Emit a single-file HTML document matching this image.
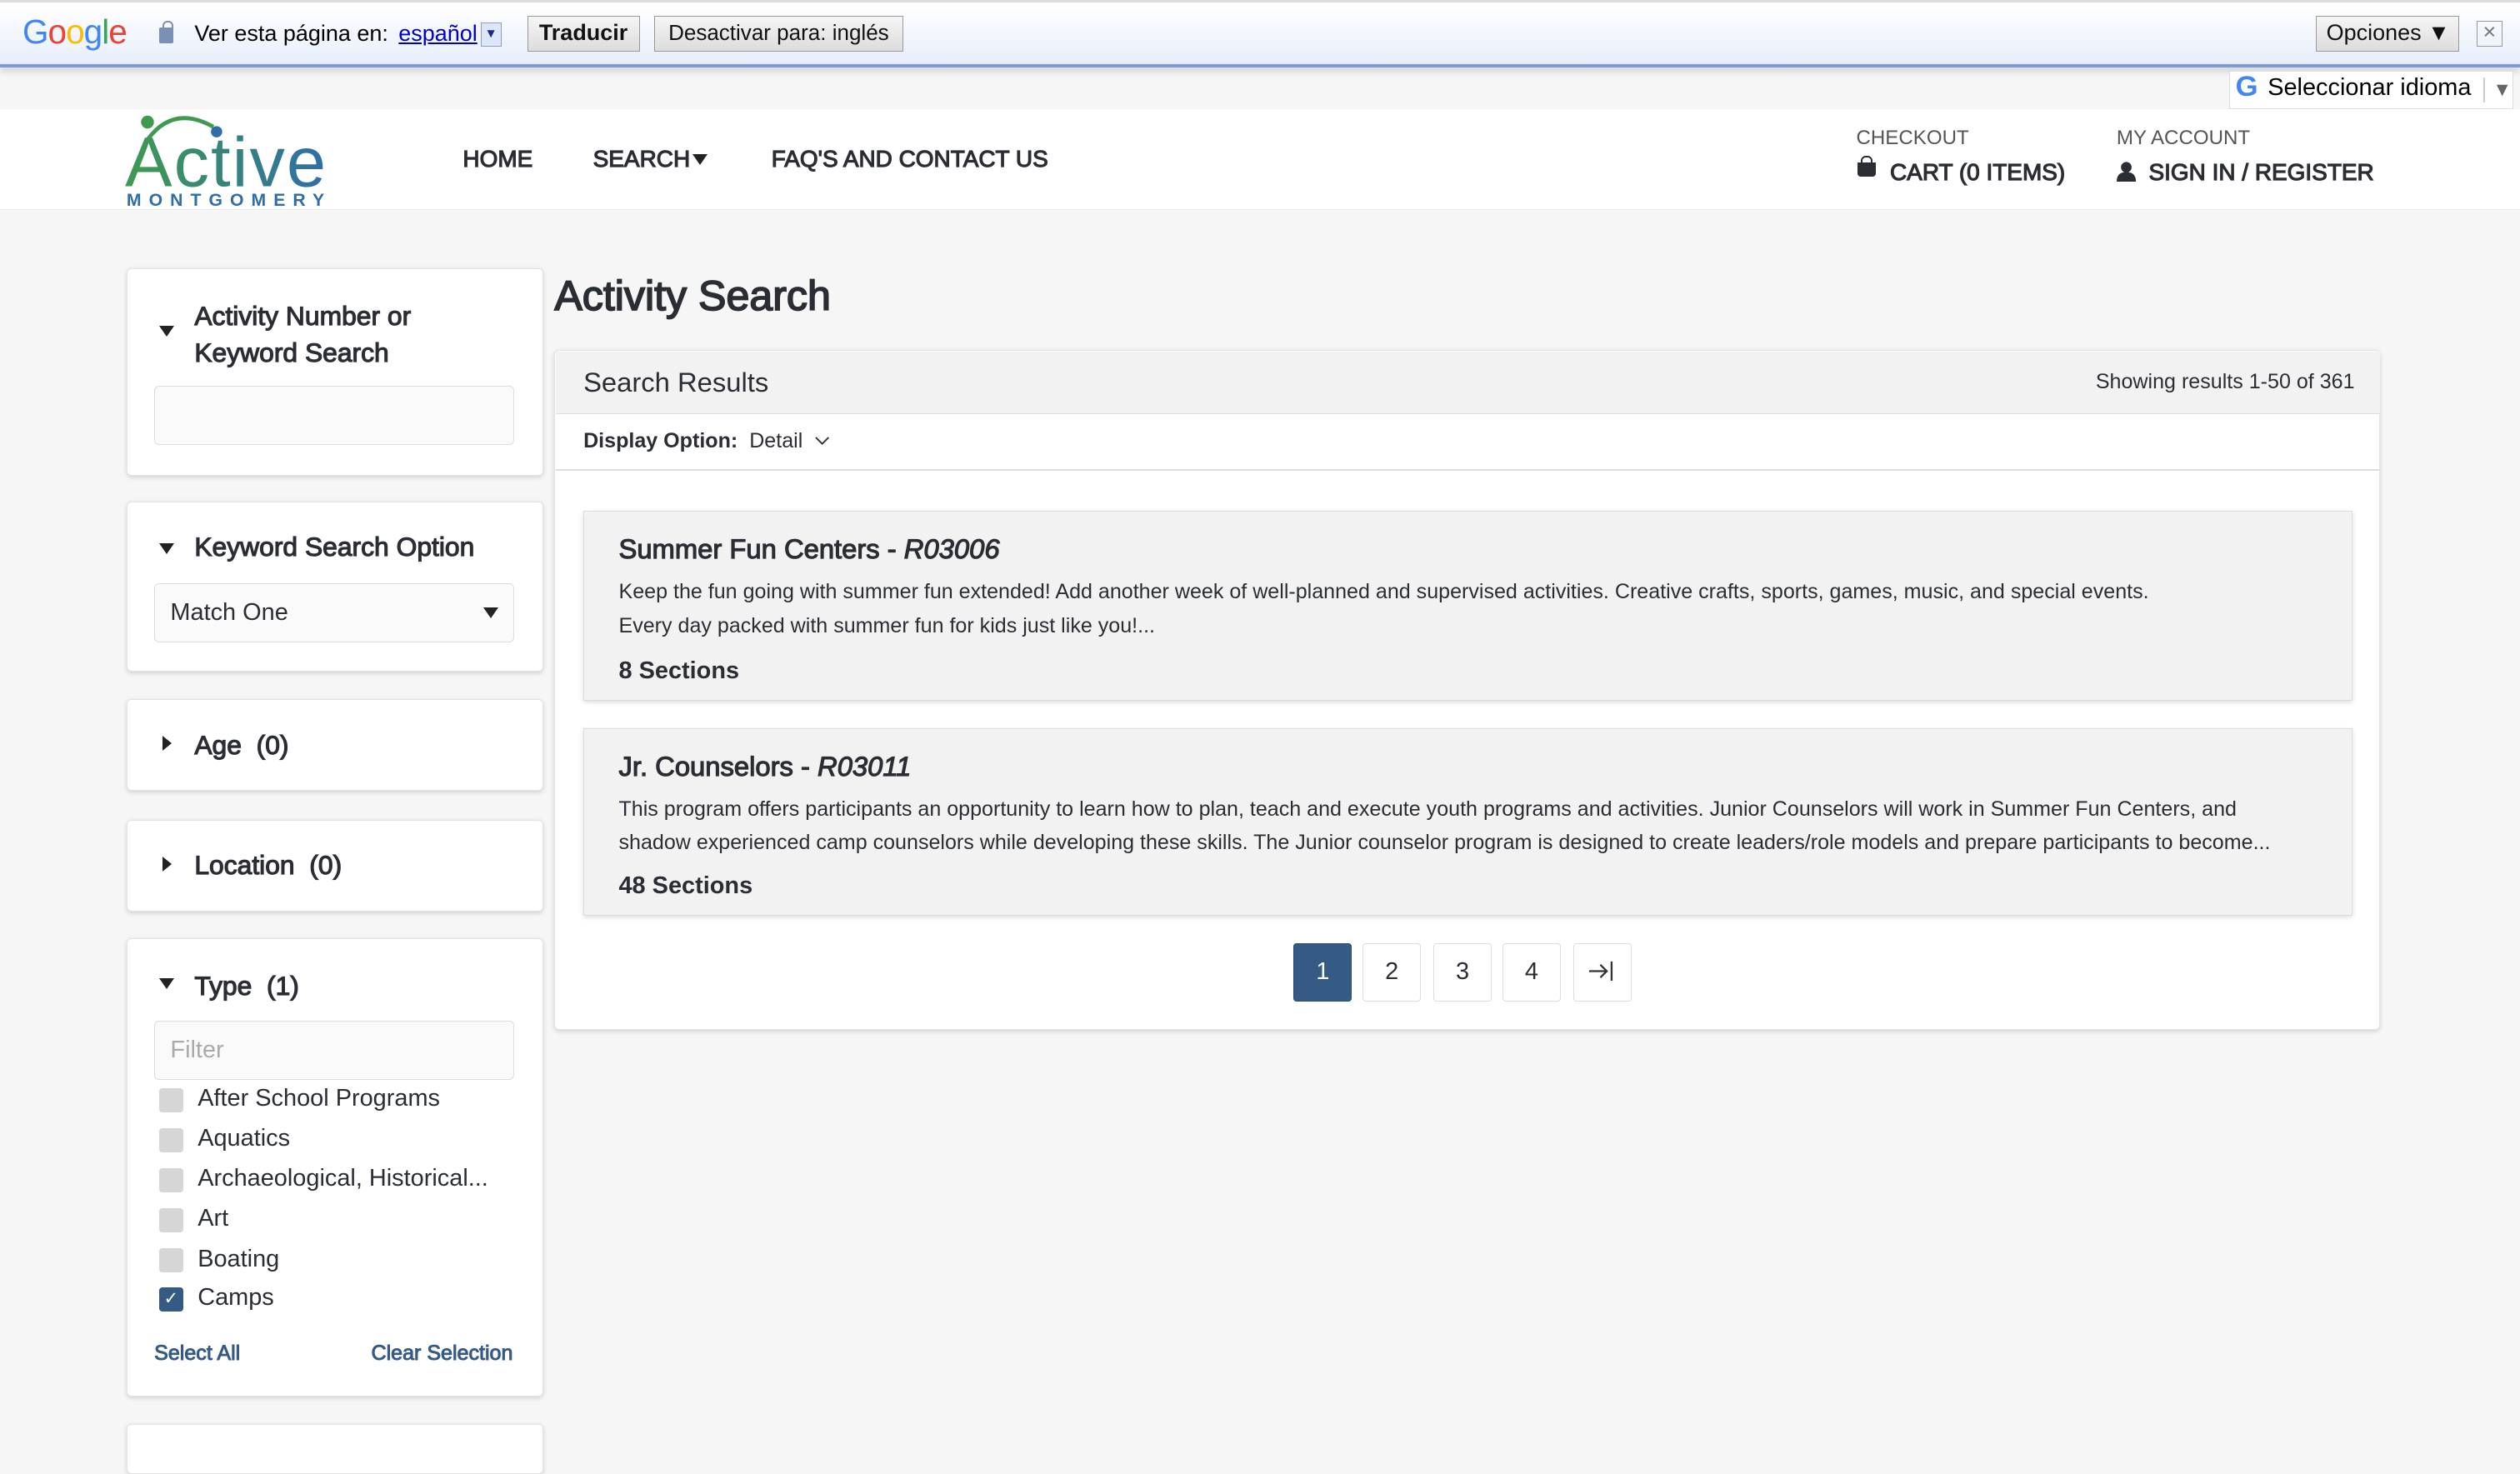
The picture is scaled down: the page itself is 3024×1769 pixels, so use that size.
<!DOCTYPE html>
<html><head><meta charset="utf-8">
<style>
html{zoom:1.928571}
body{margin:0;width:1568px;height:899px;overflow:hidden;background:#f6f6f6;font-family:"Liberation Sans",Arial,sans-serif;color:#2a2d33;position:relative}
.a{position:absolute;white-space:nowrap}
.card{position:absolute;background:#fff;border:1px solid #e3e3e3;border-radius:3px;box-shadow:0 1px 3px rgba(0,0,0,.15)}
.tri{position:absolute;width:0;height:0;border-left:5px solid transparent;border-right:5px solid transparent;border-top:7px solid #222}
.trir{position:absolute;width:0;height:0;border-top:5px solid transparent;border-bottom:5px solid transparent;border-left:6px solid #222}
.h{font-size:16.5px;font-weight:normal;color:#2a2d33;-webkit-text-stroke:.6px #2a2d33}
.inp{position:absolute;background:#fafafa;border:1px solid #ddd;border-radius:3px}
.cb{position:absolute;width:15px;height:15px;background:#d6d6d6;border-radius:2px;left:99px}
.lbl{position:absolute;left:123px;font-size:15px;color:#2a2d33;white-space:nowrap}
.res{position:absolute;left:363px;width:1100px;background:#f2f2f2;border:1px solid #ddd;box-shadow:0 1px 3px rgba(0,0,0,.15)}
.pg{position:absolute;top:587px;width:35px;height:35px;border:1px solid #ddd;border-radius:2px;background:#fff;font-size:15px;text-align:center;line-height:35px;color:#2a2d33}
.btn{position:absolute;top:10px;height:22px;border:1px solid #999;background:linear-gradient(#f6f6f6,#dcdcdc);font-size:14px;line-height:20px;padding:0 6px;box-sizing:border-box;color:#111;white-space:nowrap;text-align:center}
.nav{font-size:14.5px;-webkit-text-stroke:.6px #2a2d33}
</style></head><body>
<div class="a" style="left:0;top:0;width:1568px;height:41px;background:linear-gradient(#fff,#e6eefa);border-top:2px solid #ddd;box-sizing:border-box"></div>
<div class="a" style="left:0;top:40px;width:1568px;height:2px;background:#7b9ad6;box-shadow:0 2px 4px rgba(0,0,0,.25)"></div>
<div class="a" style="left:14px;top:8px;font-size:21px;letter-spacing:-.5px"><span style="color:#4285f4">G</span><span style="color:#ea4335">o</span><span style="color:#fbbc05">o</span><span style="color:#4285f4">g</span><span style="color:#34a853">l</span><span style="color:#ea4335">e</span></div>
<div class="a" style="left:99px;top:17px;width:9px;height:10px;background:#7c8fb5;border-radius:1px"></div>
<div class="a" style="left:101px;top:13px;width:5px;height:6px;border:1.5px solid #7c8fb5;border-bottom:none;border-radius:3px 3px 0 0"></div>
<div class="a" style="left:121px;top:13px;font-size:14px;color:#000">Ver esta página en:</div>
<div class="a" style="left:248px;top:13px;font-size:14px;color:#00c;text-decoration:underline">español</div>
<div class="a" style="left:299px;top:14px;width:13px;height:15px;border:1px solid #99b;background:#dde6f7;box-sizing:border-box;font-size:8px;text-align:center;line-height:13px;color:#228">▼</div>
<div class="btn" style="left:328px;width:70px;font-weight:bold">Traducir</div>
<div class="btn" style="left:407px;width:155px;font-size:13.5px">Desactivar para: inglés</div>
<div class="btn" style="left:1441px;width:89px">Opciones ▼</div>
<div class="a" style="left:1541px;top:13px;width:16px;height:16px;border:1px solid #999;box-sizing:border-box;font-size:14px;line-height:13px;text-align:center;color:#777">×</div>
<div class="a" style="left:1387px;top:44px;width:177px;height:24px;background:#fff;border:1px solid #ddd;box-sizing:border-box"></div>
<div class="a" style="left:1391px;top:44px;font-size:18px;font-weight:bold;color:#4285f4">G</div>
<div class="a" style="left:1411px;top:46px;font-size:15px;color:#000">Seleccionar idioma</div>
<div class="a" style="left:1545px;top:48px;width:1px;height:16px;background:#ccc"></div>
<div class="a" style="left:1551px;top:49px;font-size:12px;color:#666">▼</div>
<div class="a" style="left:0;top:68px;width:1568px;height:62px;background:#fff;border-bottom:1px solid #eaeaea"></div>
<svg class="a" style="left:78px;top:69px" width="128" height="62" viewBox="0 0 128 62">
<defs><linearGradient id="g" x1="0" x2="1"><stop offset="0" stop-color="#3f9a4f"/><stop offset="1" stop-color="#2f6ea8"/></linearGradient></defs>
<path d="M14 18 Q30 -4 55 10" stroke="#3f9a4f" stroke-width="2.5" fill="none"/>
<circle cx="14" cy="7" r="4" fill="#3f9a4f"/>
<circle cx="57" cy="13" r="3.5" fill="#2f6ea8"/>
<text x="0" y="47" font-family="Liberation Sans" font-size="44" fill="url(#g)" letter-spacing="-1" textLength="124">Active</text>
<text x="1" y="59" font-family="Liberation Sans" font-size="11" font-weight="bold" fill="#2f6ea8" textLength="123">MONTGOMERY</text>
</svg>
<div class="a nav" style="left:288px;top:91px">HOME</div>
<div class="a nav" style="left:369px;top:91px">SEARCH</div>
<div class="tri" style="left:431px;top:96px"></div>
<div class="a nav" style="left:480px;top:91px">FAQ'S AND CONTACT US</div>
<div class="a" style="left:1155px;top:79px;font-size:12.5px;color:#555">CHECKOUT</div>
<div class="a" style="left:1156px;top:101px;width:11px;height:9px;background:#2a2d33;border-radius:0 0 2px 2px"></div>
<div class="a" style="left:1158px;top:97px;width:5px;height:4px;border:1.5px solid #2a2d33;border-bottom:none;border-radius:3px 3px 0 0"></div>
<div class="a nav" style="left:1176px;top:99px">CART (0 ITEMS)</div>
<div class="a" style="left:1317px;top:79px;font-size:12.5px;color:#555">MY ACCOUNT</div>
<svg class="a" style="left:1317px;top:100px" width="12" height="13" viewBox="0 0 12 13"><circle cx="6" cy="4" r="3.3" fill="#2a2d33"/><path d="M0 13 Q0 7 6 7 Q12 7 12 13Z" fill="#2a2d33"/></svg>
<div class="a nav" style="left:1337px;top:99px">SIGN IN / REGISTER</div>
<div class="card" style="left:79px;top:167px;width:258px;height:128px"></div>
<div class="tri" style="left:99px;top:203px"></div>
<div class="a h" style="left:121px;top:185px;line-height:23px">Activity Number or<br>Keyword Search</div>
<div class="inp" style="left:96px;top:240px;width:223px;height:36px"></div>
<div class="card" style="left:79px;top:312px;width:258px;height:105px"></div>
<div class="tri" style="left:99px;top:338px"></div>
<div class="a h" style="left:121px;top:331px">Keyword Search Option</div>
<div class="inp" style="left:96px;top:363px;width:223px;height:36px"></div>
<div class="a" style="left:106px;top:373px;font-size:15px">Match One</div>
<div class="tri" style="left:301px;top:378px"></div>
<div class="card" style="left:79px;top:435px;width:258px;height:56px"></div>
<div class="trir" style="left:101px;top:458px"></div>
<div class="a h" style="left:121px;top:454px">Age &nbsp;(0)</div>
<div class="card" style="left:79px;top:510px;width:258px;height:56px"></div>
<div class="trir" style="left:101px;top:533px"></div>
<div class="a h" style="left:121px;top:529px">Location &nbsp;(0)</div>
<div class="card" style="left:79px;top:584px;width:258px;height:284px"></div>
<div class="tri" style="left:99px;top:609px"></div>
<div class="a h" style="left:121px;top:604px">Type &nbsp;(1)</div>
<div class="inp" style="left:96px;top:635px;width:223px;height:36px"></div>
<div class="a" style="left:106px;top:645px;font-size:15px;color:#aaa">Filter</div>
<div class="cb" style="top:677px"></div><div class="lbl" style="top:675px">After School Programs</div>
<div class="cb" style="top:702px"></div><div class="lbl" style="top:700px">Aquatics</div>
<div class="cb" style="top:727px"></div><div class="lbl" style="top:725px">Archaeological, Historical...</div>
<div class="cb" style="top:752px"></div><div class="lbl" style="top:750px">Art</div>
<div class="cb" style="top:777px"></div><div class="lbl" style="top:775px">Boating</div>
<div class="cb" style="top:801px;background:#345a85;color:#fff;font-size:11px;text-align:center;line-height:15px">✓</div><div class="lbl" style="top:799px">Camps</div>
<div class="a" style="left:96px;top:835px;font-size:13px;color:#345a85;-webkit-text-stroke:.5px #345a85">Select All</div>
<div class="a" style="left:231px;top:835px;font-size:13px;color:#345a85;-webkit-text-stroke:.5px #345a85">Clear Selection</div>
<div class="card" style="left:79px;top:886px;width:258px;height:30px"></div>
<div class="a" style="left:345px;top:169px;font-size:26px;-webkit-text-stroke:.9px #2a2d33">Activity Search</div>
<div class="card" style="left:345px;top:218px;width:1135px;height:422px;border-radius:3px"></div>
<div class="a" style="left:346px;top:219px;width:1135px;height:38px;background:#f2f2f2;border-bottom:1px solid #ddd"></div>
<div class="a" style="left:363px;top:228px;font-size:17px">Search Results</div>
<div class="a" style="left:1304px;top:230px;font-size:13px">Showing results 1-50 of 361</div>
<div class="a" style="left:346px;top:292px;width:1135px;height:1px;background:#ddd"></div>
<div class="a" style="left:363px;top:267px;font-size:13px"><b>Display Option:</b>&nbsp; Detail &nbsp;<svg width="10" height="7" viewBox="0 0 10 7"><path d="M1 1L5 5L9 1" stroke="#333" fill="none"/></svg></div>
<div class="res" style="top:318px;height:117px"></div>
<div class="a" style="left:385px;top:332px;font-size:17px;-webkit-text-stroke:.6px #2a2d33">Summer Fun Centers - <i>R03006</i></div>
<div class="a" style="left:385px;top:358px;font-size:13px;line-height:21px">Keep the fun going with summer fun extended! Add another week of well-planned and supervised activities. Creative crafts, sports, games, music, and special events.<br>Every day packed with summer fun for kids just like you!...</div>
<div class="a" style="left:385px;top:409px;font-size:15px;font-weight:bold">8 Sections</div>
<div class="res" style="top:453px;height:116px"></div>
<div class="a" style="left:385px;top:467px;font-size:17px;-webkit-text-stroke:.6px #2a2d33">Jr. Counselors - <i>R03011</i></div>
<div class="a" style="left:385px;top:493px;font-size:13px;line-height:21px">This program offers participants an opportunity to learn how to plan, teach and execute youth programs and activities. Junior Counselors will work in Summer Fun Centers, and<br>shadow experienced camp counselors while developing these skills. The Junior counselor program is designed to create leaders/role models and prepare participants to become...</div>
<div class="a" style="left:385px;top:543px;font-size:15px;font-weight:bold">48 Sections</div>
<div class="pg" style="left:805px;background:#345a85;color:#fff;border-color:#2c4d73">1</div>
<div class="pg" style="left:848px">2</div>
<div class="pg" style="left:892px">3</div>
<div class="pg" style="left:935px">4</div>
<div class="pg" style="left:979px"><svg width="18" height="14" viewBox="0 0 18 14" style="vertical-align:-2px"><path d="M1 7H12M8 3L12 7L8 11M15 1V13" stroke="#333" stroke-width="1.2" fill="none"/></svg></div>
</body></html>
